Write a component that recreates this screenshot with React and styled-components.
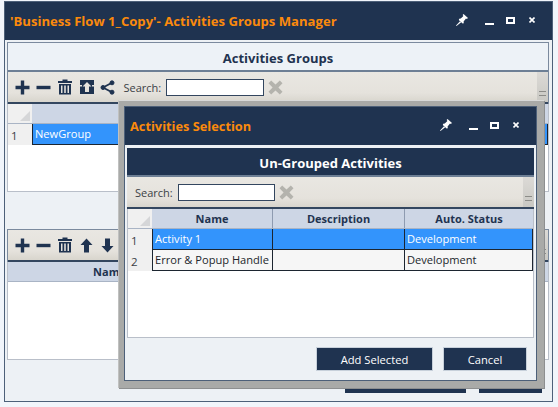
import React from "react";
import styled, { createGlobalStyle } from "styled-components";

const Global = createGlobalStyle`
  html, body { margin: 0; padding: 0; background: #f1f5fb; }
  * { box-sizing: border-box; }
`;

const NAVY = "#1f3350";

const Page = styled.div`
  position: relative;
  width: 558px;
  height: 407px;
  overflow: hidden;
  padding: 1px 5px 5px 4px;
  background: #f1f5fb;
  font-family: "Open Sans", "Noto Sans", sans-serif;
  color: #22262c;
`;

const Window = styled.div`
  height: 100%;
  display: flex;
  flex-direction: column;
  border: 1px solid #4d6079;
  background: #edf1f5;
`;

const TitleBar = styled.div`
  flex: none;
  height: ${(p) => p.$h}px;
  display: flex;
  align-items: center;
  padding-left: ${(p) => p.$pl}px;
  background: ${NAVY};
`;

const TitleText = styled.div`
  flex: 1;
  color: #fb8a0c;
  font-size: ${(p) => p.$size}px;
  font-weight: 700;
  white-space: nowrap;
  margin-top: -1px;
`;

const WindowControls = styled.div`
  display: flex;
  align-items: center;
  margin-right: 7px;
  margin-top: -2px;
  color: #fff;
`;

const ControlSlot = styled.div`
  width: ${(p) => p.$w}px;
  height: 16px;
  display: flex;
  align-items: center;
  justify-content: center;
`;

const Panel = styled.div`
  flex: 1;
  margin: 2px 3px 0 2px;
  display: flex;
  flex-direction: column;
  min-height: 0;
`;

const PanelBox = styled.div`
  flex: none;
  border: 1px solid #7b8a9e;
  border-bottom: none;
  display: flex;
  flex-direction: column;
`;

const PanelHeading = styled.div`
  height: ${(p) => p.$h}px;
  flex: none;
  display: flex;
  align-items: center;
  justify-content: center;
  padding-top: ${(p) => (p.$dark ? 3 : 2)}px;
  font-size: 13px;
  font-weight: 700;
  color: ${(p) => (p.$dark ? "#fff" : NAVY)};
  background: ${(p) => (p.$dark ? NAVY : "#edf2f7")};
  border-bottom: 2px solid #6d7f95;
`;

const Toolbar = styled.div`
  position: relative;
  height: ${(p) => p.$h}px;
  flex: none;
  display: flex;
  align-items: center;
  padding-left: ${(p) => p.$pl}px;
  background: linear-gradient(#e9e7e2, #e5e2dc 70%, #d8d5cd);
  border-bottom: 2px solid #33465f;
  font-size: 11px;
  color: #3b3f45;
`;

const ToolButton = styled.div`
  width: 21.3px;
  height: 18px;
  display: flex;
  align-items: center;
  justify-content: center;
  color: ${NAVY};
`;

const SearchLabel = styled.span`
  margin: 0 5px 0 ${(p) => p.$ml ?? 0}px;
`;

const SearchInput = styled.div`
  width: ${(p) => p.$w}px;
  height: 17px;
  background: #fff;
  border: 1px solid #33465f;
`;

const ClearIcon = styled.div`
  margin-left: 4px;
  display: flex;
  color: #b4b3ad;
`;

const Grip = styled.div`
  position: absolute;
  right: 0;
  top: 0;
  bottom: 0;
  width: 11px;
  background: linear-gradient(#dcdad6, #c9c8c3);
  &::after {
    content: "";
    position: absolute;
    left: 2px;
    right: 2px;
    bottom: 6px;
    height: 3px;
    border-top: 1px solid #8c8c88;
    border-bottom: 1px solid #8c8c88;
  }
`;

const GridArea = styled.div`
  flex: ${(p) => (p.$h ? "none" : 1)};
  height: ${(p) => (p.$h ? `${p.$h}px` : "auto")};
  min-height: 0;
  background: #fff;
  border: 1px solid #b9bfc9;
  border-top: none;
  overflow: hidden;
`;

const HeaderRow = styled.div`
  display: grid;
  grid-template-columns: ${(p) => p.$cols};
  height: 20px;
  background: #cdd6e5;
  border-bottom: 1px solid #a9b4c5;
`;

const Corner = styled.div`
  position: relative;
  background: #f0f0f0;
  &::after {
    content: "";
    position: absolute;
    right: 2px;
    bottom: 2px;
    border-style: solid;
    border-width: 0 0 10px 10px;
    border-color: transparent transparent #d5d6d8 transparent;
  }
`;

const HeaderCell = styled.div`
  display: flex;
  align-items: center;
  justify-content: center;
  font-size: 11px;
  font-weight: 700;
  color: ${NAVY};
  border-right: 1px solid #8e9bb0;
  &:last-child { border-right: none; }
`;

const DataRow = styled.div`
  display: grid;
  grid-template-columns: ${(p) => p.$cols};
  height: ${(p) => p.$h ?? 20}px;
`;

const RowNumber = styled.div`
  display: flex;
  align-items: center;
  padding: 2px 0 0 3px;
  background: #f0f0f0;
  font-size: 11.5px;
  color: #3b3f45;
`;

const Cell = styled.div`
  display: flex;
  align-items: center;
  padding: 0 0 2px 2px;
  font-size: 11.1px;
  white-space: nowrap;
  overflow: hidden;
  color: ${(p) => (p.$selected ? "#fff" : "#22262c")};
  background: ${(p) => (p.$selected ? "#3394fc" : "#f6f6f6")};
  border-right: 1px solid #1c2530;
  border-bottom: 1px solid #1c2530;
  border-left: ${(p) => (p.$first ? "1px solid #1c2530" : "none")};
`;

const Gap = styled.div`
  flex: none;
  height: ${(p) => p.$h}px;
`;

const BackButtons = styled.div`
  display: flex;
  justify-content: flex-end;
  gap: 13px;
  padding: 9px 7px 0 0;
`;

const BackButton = styled.div`
  width: ${(p) => p.$w}px;
  height: 24px;
  background: ${NAVY};
`;

const Modal = styled.div`
  position: absolute;
  left: 118px;
  top: 100px;
  width: 426px;
  height: 288px;
  display: flex;
  flex-direction: column;
  background: #a9aaa8;
  border-top: 1px solid #d8d9d8;
  border-left: 1px solid #c0c1c0;
  padding: 5px 7px 7px 5px;
  box-shadow: 1px 1px 0 #8d8f90;
`;

const ModalInner = styled.div`
  flex: 1;
  display: flex;
  flex-direction: column;
  border: 1px solid #4d6079;
  background: #edf1f5;
  min-height: 0;
`;

const ModalBody = styled.div`
  flex: 1;
  margin: 3px 2px 0 2px;
  display: flex;
  flex-direction: column;
  min-height: 0;
`;

const Footer = styled.div`
  flex: none;
  height: 42px;
  display: flex;
  justify-content: flex-end;
  align-items: center;
  gap: 10px;
  padding-right: 7px;
`;

const Button = styled.button`
  width: ${(p) => p.$w}px;
  height: 24px;
  border: 1px solid #c7d0da;
  background: ${NAVY};
  color: #fff;
  font: 400 11.2px "Open Sans", "Noto Sans", sans-serif;
  padding: 0;
`;

const Pin = () => (
  <svg width="14" height="14" viewBox="0 0 14 14" fill="currentColor">
    <path d="M8.5 1 L13 5 L11.8 6 L11 5.4 L8.6 8.4 L8.8 10.2 L7.6 10.4 L3.8 7 L4.2 5.8 L5.8 5.6 L8.4 3 L7.6 2 Z" />
    <path d="M5 8.2 L6.2 9.2 L1.5 13 L1 12.6 Z" />
  </svg>
);
const Min = () => (
  <svg width="9" height="10" viewBox="0 0 9 10" fill="currentColor">
    <rect x="0" y="8" width="9" height="2" />
  </svg>
);
const Max = () => (
  <svg width="9" height="7" viewBox="0 0 9 7" fill="none" stroke="currentColor">
    <rect x="1" y="1" width="7" height="5" strokeWidth="2" />
  </svg>
);
const Close = () => (
  <svg width="6" height="6" viewBox="0 0 6 6" stroke="currentColor" strokeWidth="1.6">
    <path d="M0.5 0.5 L5.5 5.5 M5.5 0.5 L0.5 5.5" />
  </svg>
);

const Plus = () => (
  <svg width="15" height="15" viewBox="0 0 15 15" fill="currentColor">
    <path d="M5.8 0.5 H9.2 V5.8 H14.5 V9.2 H9.2 V14.5 H5.8 V9.2 H0.5 V5.8 H5.8 Z" />
  </svg>
);
const Minus = () => (
  <svg width="15" height="15" viewBox="0 0 15 15" fill="currentColor">
    <rect x="0.5" y="5.8" width="14" height="3.4" />
  </svg>
);
const Trash = () => (
  <svg width="16" height="16" viewBox="0 0 16 16" fill="currentColor">
    <path d="M5.5 0.5 H10.5 V2 H15 V4 H1 V2 H5.5 Z" />
    <path d="M2 5 H14 V15.5 H2 Z M4 6.5 V14 H5.5 V6.5 Z M7.2 6.5 V14 H8.8 V6.5 Z M10.5 6.5 V14 H12 V6.5 Z" fillRule="evenodd" />
  </svg>
);
const Expand = () => (
  <svg width="14" height="14" viewBox="0 0 14 14" fill="currentColor">
    <path
      fillRule="evenodd"
      d="M0 0 H14 V5 H12 V6.5 H14 V14 H0 V6.5 H2 V5 H0 Z M7 2 L2.5 6.5 H5 V12 H9 V6.5 H11.5 Z"
    />
  </svg>
);
const Share = () => (
  <svg width="15" height="15" viewBox="0 0 15 15" fill="currentColor" stroke="currentColor">
    <circle cx="12" cy="2.8" r="2" />
    <circle cx="3" cy="7.5" r="2" />
    <circle cx="12" cy="12.2" r="2" />
    <path d="M12 2.8 L3 7.5 L12 12.2" fill="none" strokeWidth="1.8" />
  </svg>
);
const ArrowUp = () => (
  <svg width="13" height="15" viewBox="0 0 13 15" fill="currentColor">
    <path d="M6.5 0.5 L12.5 7 H9 V14.5 H4 V7 H0.5 Z" />
  </svg>
);
const ArrowDown = () => (
  <svg width="13" height="15" viewBox="0 0 13 15" fill="currentColor">
    <path d="M6.5 14.5 L12.5 8 H9 V0.5 H4 V8 H0.5 Z" />
  </svg>
);
const BigX = () => (
  <svg width="15" height="15" viewBox="0 0 15 15" fill="currentColor">
    <path d="M3.2 0.5 L7.5 4.6 L11.8 0.5 L14.5 3.2 L10.4 7.5 L14.5 11.8 L11.8 14.5 L7.5 10.4 L3.2 14.5 L0.5 11.8 L4.6 7.5 L0.5 3.2 Z" />
  </svg>
);

const Controls = () => (
  <WindowControls>
    <ControlSlot $w={30}><Pin /></ControlSlot>
    <ControlSlot $w={24}><Min /></ControlSlot>
    <ControlSlot $w={18}><Max /></ControlSlot>
    <ControlSlot $w={26}><Close /></ControlSlot>
  </WindowControls>
);

const BACK_COLS = "24px 1fr";
const BACK_LOWER_COLS = "204px 1fr";
const MODAL_COLS = "24px 121px 132px 1fr";

const activities = [
  { id: 1, name: "Activity 1", desc: "", status: "Development", selected: true },
  { id: 2, name: "Error & Popup Handle", desc: "", status: "Development", selected: false },
];

export default function App() {
  return (
    <Page>
      <Global />
      <Window>
        <TitleBar $h={38} $pl={5}>
          <TitleText $size={13.1}>'Business Flow 1_Copy'- Activities Groups Manager</TitleText>
          <Controls />
        </TitleBar>
        <Panel>
          <PanelBox>
            <PanelHeading $h={29}>Activities Groups</PanelHeading>
            <Toolbar $h={32} $pl={4}>
              <ToolButton><Plus /></ToolButton>
              <ToolButton><Minus /></ToolButton>
              <ToolButton><Trash /></ToolButton>
              <ToolButton><Expand /></ToolButton>
              <ToolButton><Share /></ToolButton>
              <SearchLabel $ml={5}>Search:</SearchLabel>
              <SearchInput $w={98} />
              <ClearIcon><BigX /></ClearIcon>
              <Grip />
            </Toolbar>
          </PanelBox>
          <GridArea $h={88}>
            <HeaderRow $cols={BACK_COLS}>
              <Corner />
              <HeaderCell />
            </HeaderRow>
            <DataRow $cols={BACK_COLS} $h={21}>
              <RowNumber>1</RowNumber>
              <Cell $selected $first>NewGroup</Cell>
            </DataRow>
          </GridArea>
          <Gap $h={37} />
          <PanelBox>
            <Toolbar $h={32} $pl={4}>
              <ToolButton><Plus /></ToolButton>
              <ToolButton><Minus /></ToolButton>
              <ToolButton><Trash /></ToolButton>
              <ToolButton><ArrowUp /></ToolButton>
              <ToolButton><ArrowDown /></ToolButton>
              <Grip />
            </Toolbar>
          </PanelBox>
          <GridArea $h={98}>
            <HeaderRow $cols={BACK_LOWER_COLS}>
              <HeaderCell>Name</HeaderCell>
              <HeaderCell />
            </HeaderRow>
          </GridArea>
          <BackButtons>
            <BackButton $w={121} />
            <BackButton $w={63} />
          </BackButtons>
        </Panel>
      </Window>

      <Modal>
        <ModalInner>
          <TitleBar $h={38} $pl={5}>
            <TitleText $size={12.8}>Activities Selection</TitleText>
            <Controls />
          </TitleBar>
          <ModalBody>
            <PanelHeading $h={29} $dark>Un-Grouped Activities</PanelHeading>
            <Toolbar $h={32} $pl={4}>
              <SearchLabel $ml={4}>Search:</SearchLabel>
              <SearchInput $w={97} />
              <ClearIcon><BigX /></ClearIcon>
              <Grip />
            </Toolbar>
            <GridArea>
              <HeaderRow $cols={MODAL_COLS}>
                <Corner />
                <HeaderCell>Name</HeaderCell>
                <HeaderCell>Description</HeaderCell>
                <HeaderCell>Auto. Status</HeaderCell>
              </HeaderRow>
              {activities.map((a) => (
                <DataRow key={a.id} $cols={MODAL_COLS} $h={21}>
                  <RowNumber>{a.id}</RowNumber>
                  <Cell $selected={a.selected} $first>{a.name}</Cell>
                  <Cell $selected={a.selected}>{a.desc}</Cell>
                  <Cell $selected={a.selected}>{a.status}</Cell>
                </DataRow>
              ))}
            </GridArea>
            <Footer>
              <Button $w={117}>Add Selected</Button>
              <Button $w={84}>Cancel</Button>
            </Footer>
          </ModalBody>
        </ModalInner>
      </Modal>
    </Page>
  );
}
